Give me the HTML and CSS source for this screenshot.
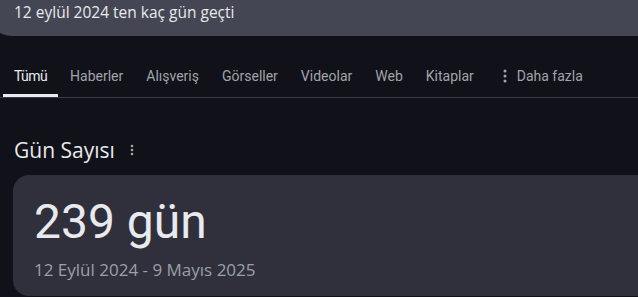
FILE: index.html
```html
<!DOCTYPE html>
<html lang="tr">
<head>
    <meta charset="UTF-8">
    <meta name="viewport" content="width=device-width, initial-scale=1.0">
    <title>12 eylül 2024 ten kaç gün geçti</title>
    <link rel="stylesheet" href="styles.css">
</head>
<body>
    <div class="search-box">
        <span class="query">12 eylül 2024 ten kaç gün geçti</span>
    </div>

    <div class="tabs">
        <a class="tab active" href="#">Tümü</a>
        <a class="tab" href="#">Haberler</a>
        <a class="tab" href="#">Alışveriş</a>
        <a class="tab" href="#">Görseller</a>
        <a class="tab" href="#">Videolar</a>
        <a class="tab" href="#">Web</a>
        <a class="tab" href="#">Kitaplar</a>
        <a class="tab more" href="#">
            <svg class="dots" width="4" height="14" viewBox="0 0 4 14"><circle cx="2" cy="2" r="1.5"/><circle cx="2" cy="7" r="1.5"/><circle cx="2" cy="12" r="1.5"/></svg>
            Daha fazla
        </a>
    </div>

    <div class="result-head">
        <h2>Gün Sayısı</h2>
        <svg class="dots small" width="4" height="12" viewBox="0 0 4 12"><circle cx="2" cy="2" r="1.3"/><circle cx="2" cy="6" r="1.3"/><circle cx="2" cy="10" r="1.3"/></svg>
    </div>

    <div class="card">
        <div class="days">239 gün</div>
        <div class="range">12 Eylül 2024 - 9 Mayıs 2025</div>
    </div>
</body>
</html>
```

FILE: styles.css
```css
* {
    margin: 0;
    padding: 0;
    box-sizing: border-box;
}

body {
    font-family: 'Open Sans', 'Liberation Sans', sans-serif;
    background-color: #111119;
    color: #e8eaed;
    overflow: hidden;
}

.search-box {
    height: 50px;
    margin: -14px 0 0 -12px;
    padding: 14px 0 0 26px;
    background-color: #444653;
    border-radius: 0 0 0 24px;
}

.query {
    font-size: 15.5px;
    line-height: 24px;
    color: #e8eaed;
}

.tabs {
    display: flex;
    margin-top: 20px;
    padding-left: 3px;
    border-bottom: 1px solid #3a3c44;
}

.tab {
    display: flex;
    align-items: center;
    padding: 10px 11px 11px;
    font-family: 'Roboto', 'Liberation Sans', sans-serif;
    font-size: 14px;
    line-height: 20px;
    color: #a0a4ab;
    text-decoration: none;
    margin-right: 1px;
}

.tab.active {
    color: #e8eaed;
    padding: 10px 11px 8px 11px;
    letter-spacing: -0.6px;
    border-bottom: 3px solid #e8eaed;
}

.tab.more {
    margin-left: 6px;
}

.dots {
    fill: #a0a4ab;
    margin-right: 10px;
}

.result-head {
    display: flex;
    align-items: center;
    margin: 38px 0 0 14px;
    height: 28px;
}

.result-head h2 {
    font-size: 21px;
    font-weight: 400;
    color: #e8eaed;
}

.dots.small {
    margin: 0 0 0 15px;
}

.card {
    margin: 11px 0 0 13px;
    padding: 20px 21px 0;
    height: 121px;
    background-color: #2f303c;
    border-radius: 16px 0 0 16px;
}

.days {
    font-family: 'Roboto', 'Liberation Sans', sans-serif;
    font-size: 48px;
    line-height: 54px;
    color: #e8eaed;
}

.range {
    margin-top: 10px;
    font-size: 17px;
    line-height: 22px;
    color: #9aa0a6;
}
```
